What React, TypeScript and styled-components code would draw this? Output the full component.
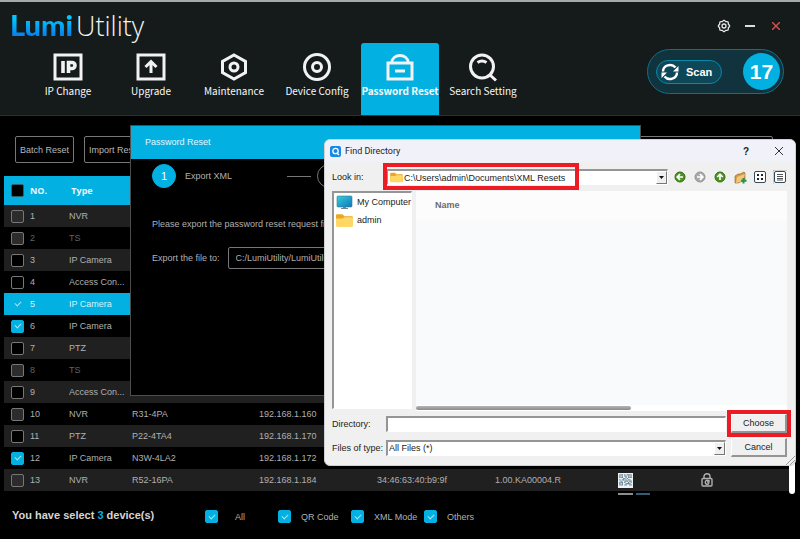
import React from "react";
import styled, { createGlobalStyle, css } from "styled-components";

const cyan = "#03b0e2";

const GlobalStyle = createGlobalStyle`
  *, *::before, *::after { box-sizing: border-box; }
  body { margin: 0; background: #000; }
  body, button, input, select { font-family: "Liberation Sans", Arial, sans-serif; font-size: 9px; }
`;

const Window = styled.div`
  position: relative;
  min-height: 100vh;
  overflow: hidden;
  background: #000;
  color: #b0b0b0;
  line-height: 12px;
`;

/* ---------- header ---------- */

const Header = styled.header`
  display: flex;
  justify-content: space-between;
  background: #151b1a;
  border-top: 2px solid #a4aaa9;
  border-bottom: 1px solid #2d302f;
`;

const Brand = styled.div`
  display: flex;
  align-items: baseline;
  gap: 3px;
  padding: 5px 0 0 10px;
  height: 41px;
  font: 300 27px/36px "Open Sans", sans-serif;
  color: #f0f3f3;
  white-space: nowrap;
`;

const BrandStrong = styled.span`
  font-family: Lato, sans-serif;
  font-size: 29px;
  font-weight: 900;
  background: linear-gradient(#00c8ff 30%, #0783ee 78%);
  background-clip: text;
  color: transparent;
`;

const Nav = styled.nav`
  display: flex;
  gap: 5px;
  padding-left: 29px;
`;

const NavButton = styled.button<{ $active?: boolean }>`
  display: flex;
  flex-direction: column;
  align-items: center;
  width: 78px;
  height: 72px;
  padding: 9px 0 0;
  border: 0;
  border-radius: 3px 3px 0 0;
  background: ${(p) => (p.$active ? cyan : "transparent")};
  color: #f8f8f8;
  font: ${(p) => (p.$active ? 700 : 400)} 10px/18px "Noto Sans CJK SC", sans-serif;
  white-space: nowrap;
  svg { flex: none; }
`;

const HeaderSide = styled.div`
  display: flex;
  flex-direction: column;
  align-items: flex-end;
  gap: 15px;
  padding: 16px 16px 0 0;
`;

const WindowControls = styled.div`
  display: flex;
  gap: 10px;
`;

const GlyphButton = styled.button`
  display: grid;
  place-items: center;
  width: 16px;
  height: 16px;
  padding: 0;
  border: 0;
  background: none;
  color: inherit;
`;

const ScanPill = styled.div`
  display: flex;
  align-items: center;
  justify-content: space-between;
  width: 137px;
  height: 45px;
  padding: 0 3px 0 8px;
  border: 1px solid #0a718e;
  border-radius: 23px;
  background: #10333d;
`;

const ScanButton = styled.button`
  display: flex;
  align-items: center;
  gap: 7px;
  width: 66px;
  height: 24px;
  padding: 0 0 0 4px;
  border: 1px solid #0a86a9;
  border-radius: 12px;
  background: #0e4858;
  color: #fff;
  font-size: 11px;
  font-weight: 700;
`;

const ScanCount = styled.output`
  display: grid;
  place-items: center;
  width: 37px;
  height: 37px;
  border-radius: 50%;
  background: ${cyan};
  color: #fff;
  font-size: 21px;
  font-weight: 700;
`;

/* ---------- device list ---------- */

const Toolbar = styled.div`
  display: flex;
  gap: 10px;
  padding: 20px 27px 13px 15px;
`;

const OutlineButton = styled.button`
  height: 27px;
  padding: 0 4px;
  border: 1px solid #777;
  border-radius: 2px;
  background: #000;
  color: #b8b8b8;
  white-space: nowrap;
`;

const FilterInput = styled.input`
  flex: 1;
  min-width: 0;
  height: 27px;
  margin-left: 300px;
  border: 1px solid #777;
  border-radius: 2px;
  background: #000;
  color: #b4b4b4;
`;

const ListArea = styled.div`
  display: flex;
  height: 319px;
  padding: 0 5px 0 4px;
  overflow: hidden;
`;

const DeviceTable = styled.table`
  flex: 1;
  width: 100%;
  height: max-content;
  table-layout: fixed;
  border-collapse: collapse;
  td, th { padding: 0; text-align: left; white-space: nowrap; overflow: hidden; }
  td:first-child, th:first-child { padding-left: 7px; }
  svg { display: block; }
`;

const HeadRow = styled.tr`
  height: 29px;
  background: ${cyan};
  color: #e6f7fc;
  font: 700 9px/12px "Open Sans", sans-serif;
`;

const Row = styled.tr<{ $state?: "selected" | "disabled" }>`
  height: 22px;
  &:nth-child(odd) { background: #202020; }
  ${(p) => p.$state === "disabled" && css`color: #626262;`}
  && { ${(p) => p.$state === "selected" && css`background: ${cyan}; color: #d4f2fb;`} }
`;

const CheckBox = styled.input.attrs({ type: "checkbox" })`
  appearance: none;
  display: grid;
  place-items: center;
  flex: none;
  width: 13px;
  height: 13px;
  margin: 0;
  border: 1px solid #777;
  border-radius: 2px;
  background: #000;
  &:disabled { background: #2c2c2c; }
  &:checked { background: ${cyan}; border-color: ${cyan}; }
  &:checked::before {
    content: "";
    width: 6px;
    height: 4px;
    margin-bottom: 2px;
    border: solid #a5e3f5;
    border-width: 0 0 1px 1px;
    transform: rotate(-45deg);
  }
`;

const HeadCheckBox = styled(CheckBox)`
  border-color: #2b6170;
`;

const ThumbBar = styled.div`
  width: 6px;
  height: 318px;
  border-radius: 3px;
  background: #fff;
`;

const Footer = styled.footer`
  display: flex;
  align-items: flex-start;
  padding: 14px 12px;
`;

const Summary = styled.strong`
  width: 193px;
  color: #d6d6d6;
  font-size: 11px;
  em { color: ${cyan}; font-style: normal; }
`;

const FilterLabel = styled.label<{ $wide?: boolean }>`
  display: flex;
  align-items: center;
  gap: ${(p) => (p.$wide ? 17 : 10)}px;
  width: 73px;
  padding-top: 1px;
  white-space: nowrap;
`;

/* ---------- password reset panel ---------- */

const ResetPanel = styled.section`
  position: absolute;
  left: 130px;
  top: 125px;
  width: 511px;
  height: 271px;
  border: 1px solid #4c4c4c;
  background: #000;
`;

const PanelTitle = styled.h2`
  margin: 0;
  padding: 0 14px;
  background: ${cyan};
  color: #e4f6fc;
  font-size: 9px;
  font-weight: 400;
  line-height: 33px;
`;

const PanelBody = styled.div`
  padding: 5px 21px;
`;

const Steps = styled.div`
  display: flex;
  align-items: center;
  margin-bottom: 30px;
`;

const StepNumber = styled.span<{ $current?: boolean }>`
  display: grid;
  place-items: center;
  width: 24px;
  height: 24px;
  border-radius: 50%;
  border: 1px solid ${(p) => (p.$current ? cyan : "#777")};
  background: ${(p) => (p.$current ? cyan : "#000")};
  color: #fff;
  font-size: 11px;
`;

const StepName = styled.span`
  width: 111px;
  padding-left: 9px;
`;

const StepLine = styled.span`
  width: 24px;
  height: 1px;
  margin-right: 6px;
  background: #777;
`;

const PathRow = styled.label`
  display: flex;
  align-items: center;
  gap: 8px;
  margin-top: 17px;
`;

const PathInput = styled.input`
  width: 200px;
  height: 22px;
  padding: 0 7px;
  border: 1px solid #777;
  border-radius: 2px;
  background: #000;
  color: #b0b0b0;
`;

const Paragraph = styled.p`
  margin: 0;
`;

/* ---------- directory dialog ---------- */

const Dialog = styled.section`
  position: absolute;
  left: 324px;
  right: 4px;
  top: 139px;
  padding-bottom: 8px;
  border: 1px solid #d0d0d4;
  border-radius: 6px;
  background: #f0f0f0;
  color: #222;
  overflow: hidden;
`;

const TitleBar = styled.div`
  display: flex;
  align-items: center;
  gap: 4px;
  height: 22px;
  padding: 0 8px 0 5px;
  background: #f1f2f9;
  font: 400 9px/12px Roboto, sans-serif;
`;

const DialogTitle = styled.h2`
  flex: 1;
  margin: 0;
  font: inherit;
`;

const TitleButtons = styled.div`
  display: flex;
  gap: 17px;
  button { font-size: 10px; font-weight: 700; }
`;

const LookRow = styled.div`
  display: flex;
  align-items: center;
  height: 28px;
  margin-top: 1px;
  padding: 0 7px;
`;

const FieldLabel = styled.label`
  flex: none;
  width: 54px;
  white-space: nowrap;
`;

const Sunken = css`
  border: 1px solid #fff;
  border-top: 2px solid #959595;
  border-left: 2px solid #959595;
  background: #fff;
`;

const ComboFrame = styled.div`
  ${Sunken}
  display: flex;
  align-items: center;
  flex: 1;
  min-width: 0;
  height: 16px;
`;

const ComboSelect = styled.select`
  appearance: none;
  flex: 1;
  min-width: 0;
  height: 12px;
  padding: 0 1px;
  border: 0;
  background: transparent;
  color: #222;
`;

const ComboArrow = styled.span`
  display: grid;
  place-items: center;
  width: 11px;
  height: 13px;
  border: 1px solid #777;
  border-top-color: #fff;
  border-left-color: #fff;
  background: #f0f0f0;
`;

const MarkedPath = styled.div`
  display: flex;
  align-items: center;
  flex: 1;
  min-width: 0;
  position: relative;
  &::after {
    content: "";
    position: absolute;
    left: -3px;
    top: -6px;
    width: 196px;
    height: 27px;
    border: 4px solid #ed1c24;
    pointer-events: none;
  }
`;

const PathCombo = styled(ComboFrame)`
  > svg { margin-left: 2px; flex: none; }
`;

const FileTools = styled.div`
  display: flex;
  gap: 4px;
  margin-left: 4px;
`;

const Panes = styled.div`
  display: flex;
  gap: 4px;
  height: 220px;
  padding: 0 8px 0 7px;
`;

const Places = styled.ul`
  ${Sunken}
  flex: none;
  width: 80px;
  margin: 0 0 2px;
  padding: 0 2px;
  list-style: none;
`;

const Place = styled.li`
  display: flex;
  align-items: center;
  gap: 4px;
  height: 18px;
  white-space: nowrap;
  svg { flex: none; }
`;

const Files = styled.div`
  display: flex;
  flex-direction: column;
  justify-content: space-between;
  flex: 1;
  background: linear-gradient(#fcfcfc 28px, #f9fafc 29px);
`;

const ColumnName = styled.div`
  padding: 8px 19px;
  color: #6c6c6c;
  font-weight: 700;
`;

const FileScroll = styled.div`
  height: 6px;
  padding-top: 1px;
  background: #fff;
  &::before {
    content: "";
    display: block;
    width: 58%;
    height: 4px;
    border-radius: 2px;
    background: linear-gradient(#b5b5b5, #8a8a8a);
  }
`;

const DialogFields = styled.div`
  display: grid;
  grid-template-columns: 54px 1fr 56px;
  align-items: center;
  row-gap: 5px;
  padding: 3px 8px 0 7px;
`;

const DirectoryInput = styled.input`
  ${Sunken}
  min-width: 0;
  height: 16px;
  margin-right: 5px;
`;

const TypeFrame = styled(ComboFrame)`
  margin-right: 5px;
`;

const PushButton = styled.button<{ $marked?: boolean }>`
  height: 19px;
  padding: 0;
  border: solid;
  border-width: 1px 2px 2px 1px;
  border-color: #fff #959595 #959595 #fff;
  background: #f0f0f0;
  color: #222;
  ${(p) => p.$marked && css`outline: 4px solid #ed1c24; outline-offset: 0;`}
`;

const Grip = styled.svg`
  position: absolute;
  right: 0;
  bottom: 0;
`;

/* ---------- icons ---------- */

const NavIcon = ({ name }: { name: string }) => (
  <svg width="30" height="30" viewBox="0 0 30 30" fill="none" stroke="#f2f2f2" strokeWidth="3">
    {name === "IP Change" && (
      <>
        <rect x="2" y="3" width="26" height="24" />
        <path d="M10 9v12M15.500 21V10.500h3.500a2.500 2.500 0 0 1 0 6h-3" strokeWidth="3.600" />
      </>
    )}
    {name === "Upgrade" && (
      <>
        <rect x="2" y="3" width="26" height="24" />
        <path d="M15 21v-10M9.500 15 15 9.500l5.500 5.500" />
      </>
    )}
    {name === "Maintenance" && (
      <>
        <path d="m15 3 11.500 6.500v11L15 27 3.500 20.500v-11z" />
        <circle cx="15" cy="15" r="4" />
      </>
    )}
    {name === "Device Config" && (
      <>
        <circle cx="15" cy="15" r="12.500" />
        <circle cx="15" cy="15" r="4.500" />
      </>
    )}
    {name === "Password Reset" && (
      <>
        <rect x="3" y="11" width="24" height="16" />
        <path d="M6.500 11c1-10 16-10 17 0M10 19h10" />
      </>
    )}
    {name === "Search Setting" && (
      <>
        <circle cx="14" cy="14.500" r="11.500" />
        <path d="m22 23 6 5.500M9.500 10.500q4.500-3 9 0" />
      </>
    )}
  </svg>
);

const GearIcon = () => {
  const pts = Array.from({ length: 32 }, (_, i) => {
    const a = (i / 32) * Math.PI * 2;
    const r = 5.2 + 0.5 * Math.cos(a * 8);
    return `${(7 + r * Math.cos(a)).toFixed(2)},${(7 + r * Math.sin(a)).toFixed(2)}`;
  }).join(" ");
  return (
    <svg width="14" height="14" fill="none" stroke="#e8e8e8" strokeWidth="1.3">
      <polygon points={pts} />
      <circle cx="7" cy="7" r="2" />
    </svg>
  );
};

const RefreshIcon = () => (
  <svg width="18" height="18" viewBox="0 0 18 18" fill="none" stroke="#fff" strokeWidth="2.400">
    <path d="M2 8.500a7 6.500 0 0 1 12.500-4M16 9.500a7 6.500 0 0 1-12.500 4" />
    <path d="M17.500 3v5.500H12zM.5 15V9.500H6z" fill="#fff" stroke="none" />
  </svg>
);

const FolderIcon = ({ size }: { size: number }) => (
  <svg width={size} height={size - 2} viewBox="0 0 16 14">
    <path d="M0 2q0-1 1-1h5l2 2h7q1 0 1 1v8H0z" fill="#e9a820" />
    <path d="M0 5h6l2-1h8v8q0 1-1 1H1q-1 0-1-1z" fill="#ffd766" />
  </svg>
);

const ComputerIcon = () => (
  <svg width="17" height="15">
    <defs>
      <linearGradient id="screen" x2="1" y2="1">
        <stop stopColor="#35d0da" />
        <stop offset="1" stopColor="#1276b8" />
      </linearGradient>
    </defs>
    <rect x="1" y="1" width="15" height="11" rx="1" fill="url(#screen)" stroke="#3a7791" strokeWidth=".6" />
    <path d="M7 12h3v1h2v1H5v-1h2z" fill="#738591" />
  </svg>
);

const ArrowIcon = ({ turn, muted }: { turn: number; muted?: boolean }) => (
  <svg width="12" height="12" viewBox="0 0 12 12">
    <circle cx="6" cy="6" r="5" fill={muted ? "#a9a9a9" : "#4c9420"} stroke={muted ? "#939393" : "#2f6d13"} />
    <path
      d="M9 6H3.500M6 3.200 3.200 6 6 8.800"
      transform={`rotate(${turn} 6 6)`}
      fill="none"
      stroke="#fff"
      strokeWidth="1.700"
    />
  </svg>
);

const NewFolderIcon = () => (
  <svg width="13" height="13">
    <path d="M1 5 4 3l2 0 4-2 1 1v7l-7 3H1z" fill="#d59b45" stroke="#8d662c" strokeWidth=".6" />
    <path d="m3 6 8-3-2 7-7 2z" fill="#f1c67d" />
    <path d="M9.500 7v5.500M7 9.800h5.500" stroke="#289443" strokeWidth="2" />
  </svg>
);

const ViewIcon = ({ detail }: { detail?: boolean }) => (
  <svg width="14" height="14" fill="none">
    {detail && <path d="M0 14V0h14" stroke="#aaa" />}
    <rect x="1.500" y="1.500" width="11" height="11" rx="1.500" fill="#fff" stroke="#34495a" />
    {detail ? (
      <path d="M4 4.500h6M4 6.500h6M4 8.500h6M4 10h6" stroke="#555" />
    ) : (
      <path d="M4 5h2m2 0h2M4 9h2m2 0h2" stroke="#222" strokeWidth="2" />
    )}
  </svg>
);

const qrRows = ["1110101111", "1010110101", "1110010111", "0001101000", "1011010110", "0100111011", "1110100101", "1010011110", "1110110011"];
const QrIcon = () => (
  <svg width="15" height="15" viewBox="0 0 12 12">
    <rect width="12" height="12" fill="#eef1f3" />
    {qrRows.map((r, y) =>
      [...r].map((c, x) => c === "1" && <rect key={`${x}-${y}`} x={x + 1} y={y + 1} width="1" height="1" fill={(x + y) % 3 ? "#6e7f88" : "#5796b8"} />)
    )}
  </svg>
);

const LockIcon = () => (
  <svg width="12" height="14" fill="none" stroke="#b0b0b0" strokeWidth="1.400">
    <rect x="1" y="5.500" width="10" height="7.500" rx="1" />
    <path d="M3 5V3.500a3 2.700 0 0 1 6 0V5M7.800 8a2 2 0 1 0 .2 2.200M8 7v2H6" />
  </svg>
);

const AppIcon = () => (
  <svg width="11" height="11">
    <rect width="11" height="11" rx="2" fill="#1489e8" />
    <circle cx="5.500" cy="5" r="2.700" fill="none" stroke="#fff" strokeWidth="1.300" />
    <path d="m7 7 2 2" stroke="#fff" strokeWidth="1.300" />
  </svg>
);

const DownIcon = () => (
  <svg width="5" height="3"><path d="M0 0h5L2.500 3z" fill="#111" /></svg>
);

/* ---------- data ---------- */

type Device = {
  type: string;
  model?: string;
  ip?: string;
  mac?: string;
  version?: string;
  checked?: boolean;
  disabled?: boolean;
  dim?: boolean;
  selected?: boolean;
};

const devices: Device[] = [
  { type: "NVR", disabled: true },
  { type: "TS", disabled: true, dim: true },
  { type: "IP Camera" },
  { type: "Access Con..." },
  { type: "IP Camera", checked: true, selected: true },
  { type: "IP Camera", checked: true },
  { type: "PTZ" },
  { type: "TS", disabled: true, dim: true },
  { type: "Access Con..." },
  { type: "NVR", model: "R31-4PA", ip: "192.168.1.160", disabled: true },
  { type: "PTZ", model: "P22-4TA4", ip: "192.168.1.170" },
  { type: "IP Camera", model: "N3W-4LA2", ip: "192.168.1.172", checked: true },
  { type: "NVR", model: "R52-16PA", ip: "192.168.1.184", mac: "34:46:63:40:b9:9f", version: "1.00.KA00004.R", disabled: true },
];

const columns = [26, 39, 63, 127, 118, 118, 123, 83];
const navItems = ["IP Change", "Upgrade", "Maintenance", "Device Config", "Password Reset", "Search Setting"];

export default function App() {
  return (
    <Window>
      <GlobalStyle />
      <Header>
        <div>
          <Brand><BrandStrong>Lumi</BrandStrong><span>Utility</span></Brand>
          <Nav>
            {navItems.map((n) => (
              <NavButton key={n} $active={n === "Password Reset"}><NavIcon name={n} />{n}</NavButton>
            ))}
          </Nav>
        </div>
        <HeaderSide>
          <WindowControls>
            <GlyphButton aria-label="Settings"><GearIcon /></GlyphButton>
            <GlyphButton aria-label="Minimize">
              <svg width="10" height="10"><path d="M0 5h10" stroke="#ddd" strokeWidth="2" /></svg>
            </GlyphButton>
            <GlyphButton aria-label="Close">
              <svg width="8" height="8"><path d="m0 0 8 8M8 0 0 8" stroke="#e04b50" strokeWidth="1.400" /></svg>
            </GlyphButton>
          </WindowControls>
          <ScanPill>
            <ScanButton><RefreshIcon />Scan</ScanButton>
            <ScanCount>17</ScanCount>
          </ScanPill>
        </HeaderSide>
      </Header>

      <main>
        <Toolbar>
          <OutlineButton>Batch Reset</OutlineButton>
          <OutlineButton>Import Reset</OutlineButton>
          <FilterInput aria-label="Filter devices" />
        </Toolbar>
        <ListArea>
          <DeviceTable>
            <colgroup>
              {columns.map((w, i) => <col key={i} width={w} />)}
              <col />
            </colgroup>
            <thead>
              <HeadRow>
                <th><HeadCheckBox aria-label="Select every device" /></th>
                <th>NO.</th>
                <th>&nbsp;Type</th>
                <th colSpan={6} />
              </HeadRow>
            </thead>
            <tbody>
              {devices.map((d, i) => (
                <Row key={i} $state={d.selected ? "selected" : d.dim ? "disabled" : undefined}>
                  <td><CheckBox aria-label={`Device ${i + 1}`} defaultChecked={d.checked} disabled={d.disabled} /></td>
                  <td>{i + 1}</td>
                  <td>{d.type}</td>
                  <td>{d.model}</td>
                  <td>{d.ip}</td>
                  <td>{d.mac}</td>
                  <td>{d.version}</td>
                  <td>{d.mac && <QrIcon />}</td>
                  <td>{d.mac && <LockIcon />}</td>
                </Row>
              ))}
              <tr>
                <td colSpan={7} />
                <td colSpan={2}>
                  <svg width="34" height="15">
                    <rect y="2" width="15" height="13" fill="#8b8d8e" />
                    <rect x="18" y="2" width="14" height="13" fill="#365d78" />
                  </svg>
                </td>
              </tr>
            </tbody>
          </DeviceTable>
          <ThumbBar />
        </ListArea>
      </main>

      <Footer>
        <Summary>You have select <em>3</em> device(s)</Summary>
        <FilterLabel $wide><CheckBox defaultChecked />All</FilterLabel>
        <FilterLabel><CheckBox defaultChecked />QR Code</FilterLabel>
        <FilterLabel><CheckBox defaultChecked />XML Mode</FilterLabel>
        <FilterLabel><CheckBox defaultChecked />Others</FilterLabel>
      </Footer>

      <ResetPanel>
        <PanelTitle>Password Reset</PanelTitle>
        <PanelBody>
          <Steps>
            <StepNumber $current>1</StepNumber>
            <StepName>Export XML</StepName>
            <StepLine />
            <StepNumber />
          </Steps>
          <Paragraph>Please export the password reset request file.</Paragraph>
          <PathRow>Export the file to:<PathInput defaultValue="C:/LumiUtility/LumiUtility" /></PathRow>
        </PanelBody>
      </ResetPanel>

      <Dialog role="dialog" aria-label="Find Directory">
        <TitleBar>
          <AppIcon />
          <DialogTitle>Find Directory</DialogTitle>
          <TitleButtons>
            <GlyphButton>?</GlyphButton>
            <GlyphButton aria-label="Close dialog">
              <svg width="8" height="8"><path d="m0 0 8 8M8 0 0 8" stroke="#333" /></svg>
            </GlyphButton>
          </TitleButtons>
        </TitleBar>
        <LookRow>
          <FieldLabel htmlFor="look">Look in:</FieldLabel>
          <MarkedPath>
            <PathCombo>
              <FolderIcon size={13} />
              <ComboSelect id="look"><option>C:\Users\admin\Documents\XML Resets</option></ComboSelect>
              <ComboArrow><DownIcon /></ComboArrow>
            </PathCombo>
          </MarkedPath>
          <FileTools>
            <GlyphButton aria-label="Back"><ArrowIcon turn={0} /></GlyphButton>
            <GlyphButton aria-label="Forward"><ArrowIcon turn={180} muted /></GlyphButton>
            <GlyphButton aria-label="Parent directory"><ArrowIcon turn={90} /></GlyphButton>
            <GlyphButton aria-label="New folder"><NewFolderIcon /></GlyphButton>
            <GlyphButton aria-label="List view"><ViewIcon /></GlyphButton>
            <GlyphButton aria-label="Detail view"><ViewIcon detail /></GlyphButton>
          </FileTools>
        </LookRow>
        <Panes>
          <Places>
            <Place><ComputerIcon />My Computer</Place>
            <Place><FolderIcon size={17} />admin</Place>
          </Places>
          <Files>
            <ColumnName>Name</ColumnName>
            <FileScroll />
          </Files>
        </Panes>
        <DialogFields>
          <FieldLabel htmlFor="directory">Directory:</FieldLabel>
          <DirectoryInput id="directory" />
          <PushButton $marked>Choose</PushButton>
          <FieldLabel htmlFor="types">Files of type:</FieldLabel>
          <TypeFrame>
            <ComboSelect id="types"><option>All Files (*)</option></ComboSelect>
            <ComboArrow><DownIcon /></ComboArrow>
          </TypeFrame>
          <PushButton>Cancel</PushButton>
        </DialogFields>
        <Grip width="9" height="9" stroke="#999"><path d="M9 0 0 9M9 4 4 9" /></Grip>
      </Dialog>
    </Window>
  );
}
